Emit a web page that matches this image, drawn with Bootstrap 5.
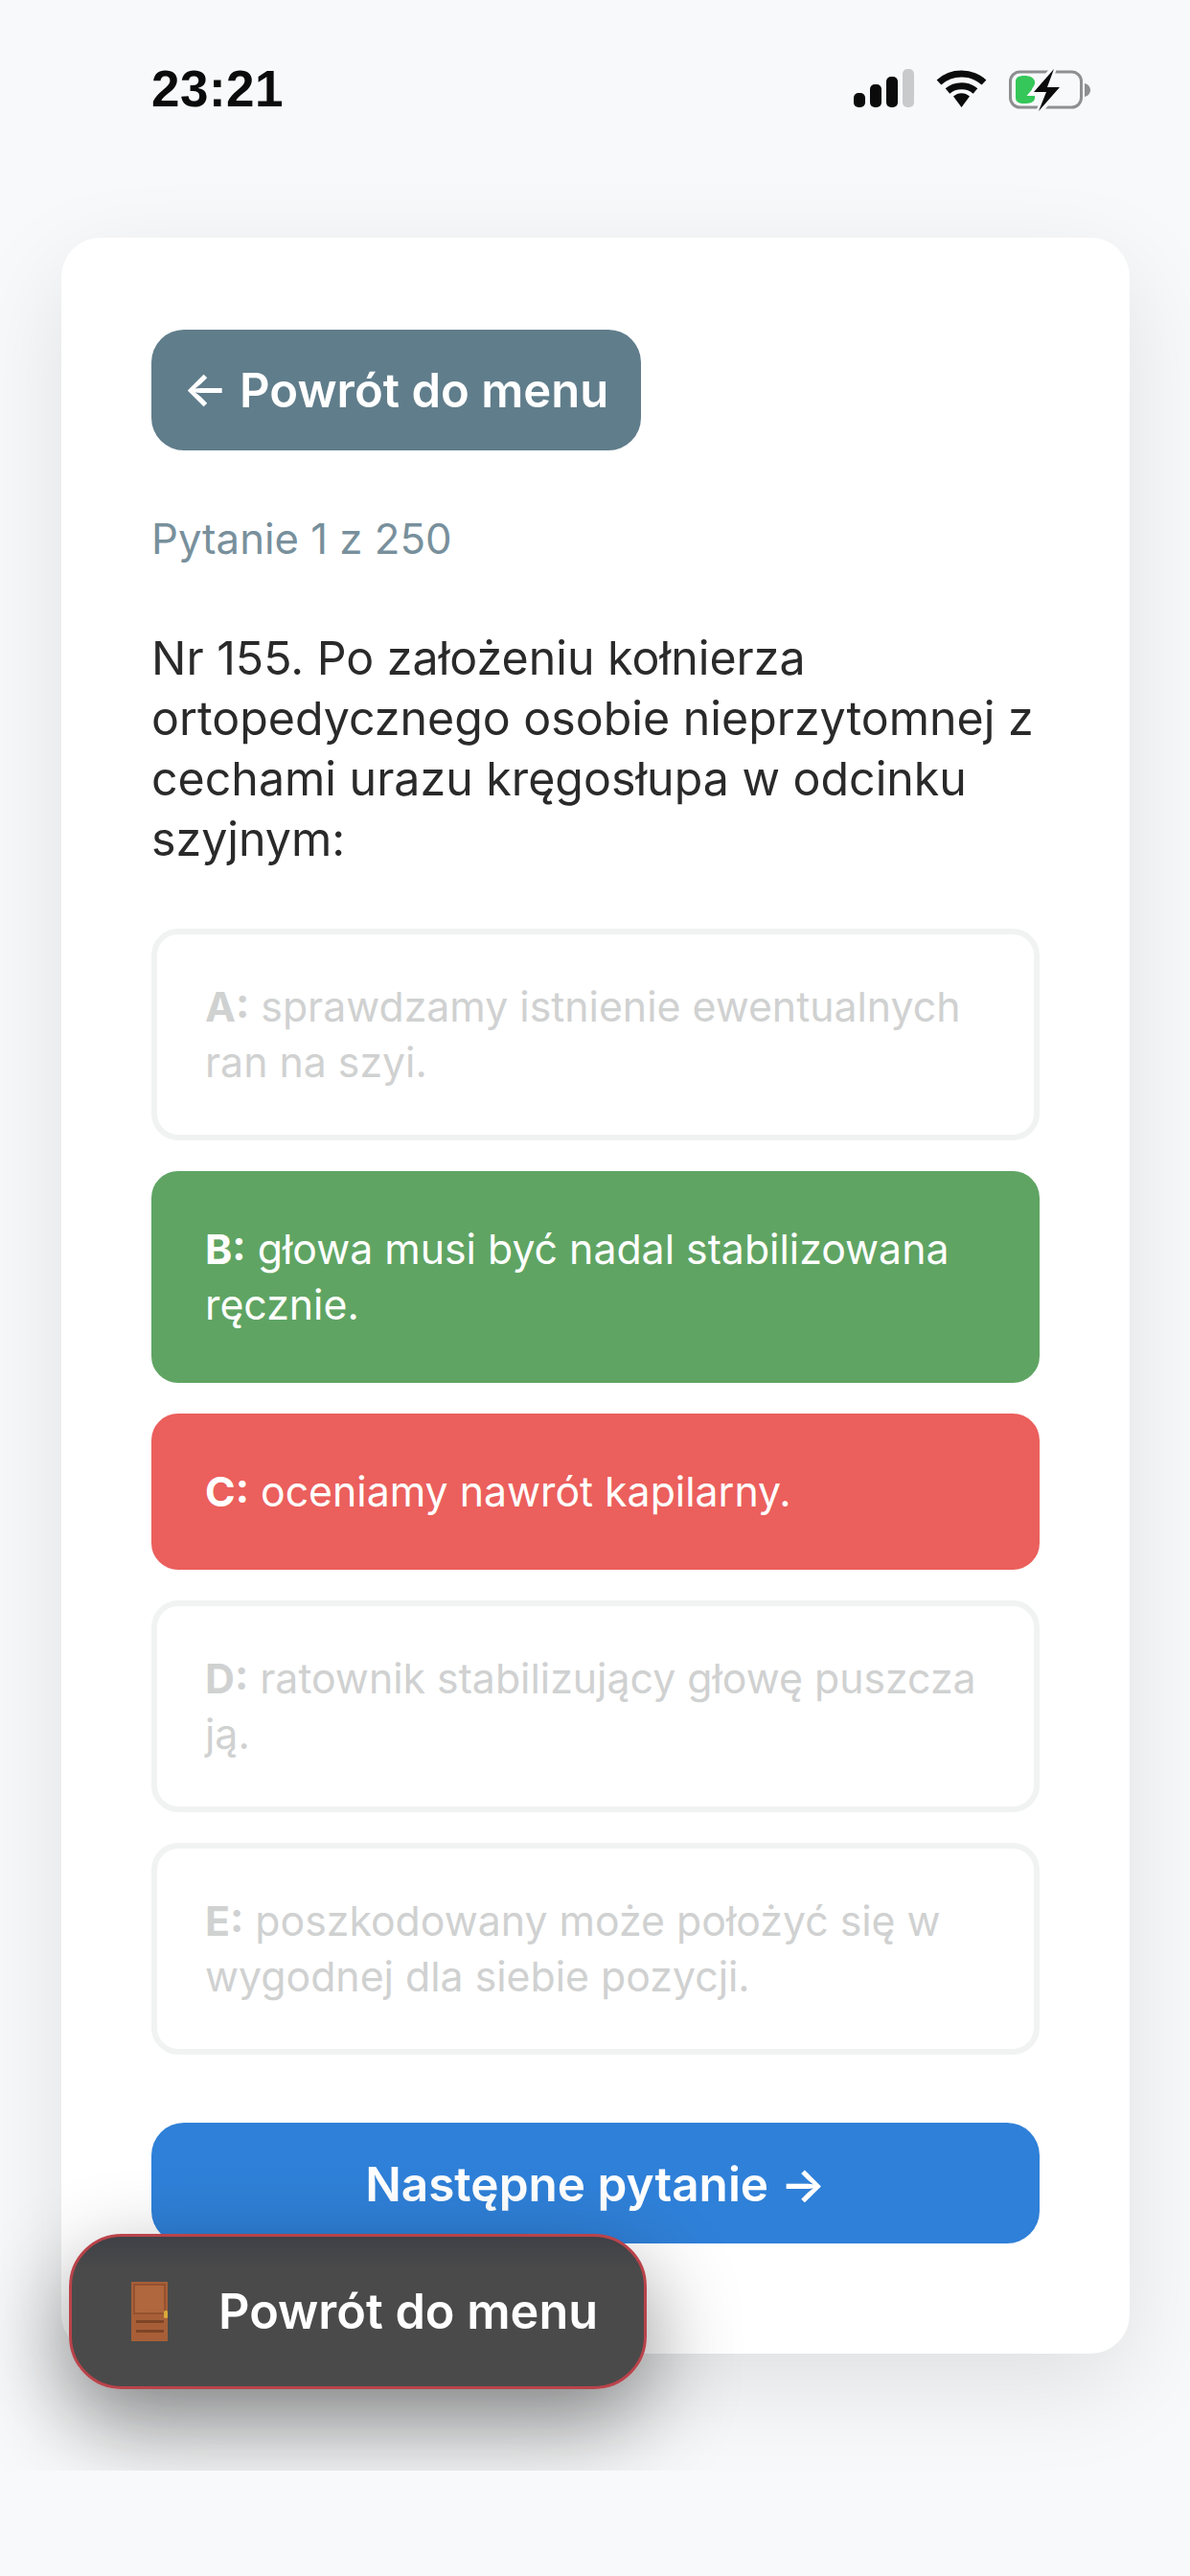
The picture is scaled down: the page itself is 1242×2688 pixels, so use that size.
<!DOCTYPE html>
<html lang="pl">
<head>
<meta charset="utf-8">
<title>Pytanie</title>
<link href="https://cdn.jsdelivr.net/npm/bootstrap@5.3.0/dist/css/bootstrap.min.css" rel="stylesheet">
<style>
html,body{margin:0;height:2688px;background:#f8f9fa;overflow:hidden}
body{font-family:Inter,"Liberation Sans",sans-serif;position:relative}
.clip-area{height:2578px;overflow:hidden;position:relative}
.status-row{height:248px;padding:0 104px 0 158px;align-items:flex-start}
.status-time{font-family:"Liberation Sans",Arimo,sans-serif;font-weight:700;font-size:53px;line-height:62px;margin-top:62px;color:#0b0b0b;letter-spacing:.5px}
.status-icons{margin-top:72px;gap:23px}
.quiz-panel{margin:0 64px;height:2208px;width:1115px;background:#fff;border-radius:41px;padding:96px 94px 0;box-shadow:0 34px 103px rgba(0,0,0,.1)}
.back-btn{background:#607d8b;color:#fff;font-size:49px;font-weight:600;line-height:58px;border:0;border-radius:34px;padding:35px 30px 33px 33px;width:511px;text-align:left;white-space:nowrap}
.back-btn:hover,.back-btn:active{background:#607d8b;color:#fff}
.progress-text{color:#78909c;font-size:43.700px;line-height:52px;margin:67px 0 0}
.question-text{color:#2a2a2a;font-size:48.300px;line-height:63px;margin:66px 0 0}
.answers{margin-top:62px;gap:32px}
.answer-item{border-radius:28px;font-size:42.800px;line-height:58px;padding:47px 50px 46px;border:6px solid transparent}
.answer-item b{font-weight:700}
.answer-muted{border-color:#f1f2f2;color:#d0d1d1;background:#fff}
.answer-good{background:#5fa463;border-color:#5fa463;color:#fff}
.answer-bad{background:#eb5f5c;border-color:#eb5f5c;color:#fff}
.next-btn{background:#2f80d8;color:#fff;font-size:49.500px;font-weight:600;line-height:58px;border:0;border-radius:34px;padding:35px 34px 33px;width:100%;margin-top:71px}
.next-btn:hover,.next-btn:active{background:#2f80d8;color:#fff}
.float-btn{position:absolute;left:72px;top:2331px;width:603px;height:162px;background:linear-gradient(#3e4147,#4a4a4a 22%);border:3px solid #b9434a;border-radius:55px;color:#fff;font-size:50.400px;font-weight:600;gap:52px;padding-left:62px;box-shadow:0 36px 95px rgba(0,0,0,.45)}
.float-btn:hover{background:#4a4a4a;color:#fff;border-color:#b9434a}
</style>
</head>
<body>
<div class="clip-area">
  <div class="status-row d-flex justify-content-between">
    <div class="status-time">23:21</div>
    <div class="status-icons d-flex align-items-start">
      <svg width="63" height="40" viewBox="0 0 63 40" aria-label="zasięg">
        <rect x="0" y="25" width="12" height="15" rx="5" fill="#0b0b0b"/>
        <rect x="17" y="16" width="12" height="24" rx="5" fill="#0b0b0b"/>
        <rect x="34" y="8" width="12" height="32" rx="5" fill="#0b0b0b"/>
        <rect x="51" y="0" width="12" height="40" rx="5" fill="#c9cacb"/>
      </svg>
      <svg width="53" height="40" viewBox="0 0 53 40" aria-label="wifi">
        <path d="M3 14 C16 2 37 2 50 14" fill="none" stroke="#0b0b0b" stroke-width="7"/>
        <path d="M12 23 C20 16 33 16 41 23" fill="none" stroke="#0b0b0b" stroke-width="7"/>
        <path d="M18 28.500 C23 24 30 24 35 28.500 L26.500 40 Z" fill="#0b0b0b"/>
      </svg>
      <svg width="85" height="44" viewBox="0 0 85 44" aria-label="bateria">
        <rect x="1.500" y="3" width="74" height="37" rx="10" fill="none" stroke="#8e8f90" stroke-width="3"/>
        <path d="M79 15 C83 16 85 19 85 22 C85 25 83 28 79 29 Z" fill="#8e8f90"/>
        <path d="M16 7 C22 7 26 9 27 13 C28 17 24 19 24 22 C24 25 28 27 27 31 C26 35 22 36 16 36 C10 36 7 34 7 30 L7 13 C7 9 10 7 16 7 Z" fill="#35c759"/>
        <path d="M47 -1 L25 25 L39 25 L31 45 L54 19 L40 19 Z" fill="#f8f9fa" stroke="#f8f9fa" stroke-width="6"/>
        <path d="M47 0 L26 24 L39 24 L31 44 L53 19 L40 19 Z" fill="#0b0b0b"/>
      </svg>
    </div>
  </div>
  <main class="quiz-panel">
    <button class="btn back-btn" type="button">← Powrót do menu</button>
    <p class="progress-text">Pytanie 1 z 250</p>
    <p class="question-text">Nr 155. Po założeniu kołnierza ortopedycznego osobie nieprzytomnej z cechami urazu kręgosłupa w odcinku szyjnym:</p>
    <div class="answers d-flex flex-column">
      <div class="answer-item answer-muted"><b>A:</b> sprawdzamy istnienie ewentualnych ran na szyi.</div>
      <div class="answer-item answer-good"><b>B:</b> głowa musi być nadal stabilizowana ręcznie.</div>
      <div class="answer-item answer-bad"><b>C:</b> oceniamy nawrót kapilarny.</div>
      <div class="answer-item answer-muted"><b>D:</b> ratownik stabilizujący głowę puszcza ją.</div>
      <div class="answer-item answer-muted"><b>E:</b> poszkodowany może położyć się w wygodnej dla siebie pozycji.</div>
    </div>
    <button class="btn next-btn" type="button">Następne pytanie →</button>
  </main>
  <button class="btn float-btn d-flex align-items-center" type="button">
    <svg width="39" height="62" viewBox="0 0 39 62" aria-hidden="true">
      <rect width="38" height="62" fill="#a85f38"/>
      <rect x="3" y="3" width="32" height="30" fill="#b0673e" stroke="#8d4c2c" stroke-width="1.500"/>
      <rect x="5" y="40" width="29" height="3" fill="#7f4528"/>
      <rect x="5" y="50" width="29" height="3" fill="#7f4528"/>
      <rect x="34" y="30" width="4" height="8" rx="1.500" fill="#d9a93a"/>
    </svg>
    <span>Powrót do menu</span>
  </button>
</div>
<script src="https://cdn.jsdelivr.net/npm/bootstrap@5.3.0/dist/js/bootstrap.bundle.min.js"></script>
</body>
</html>
